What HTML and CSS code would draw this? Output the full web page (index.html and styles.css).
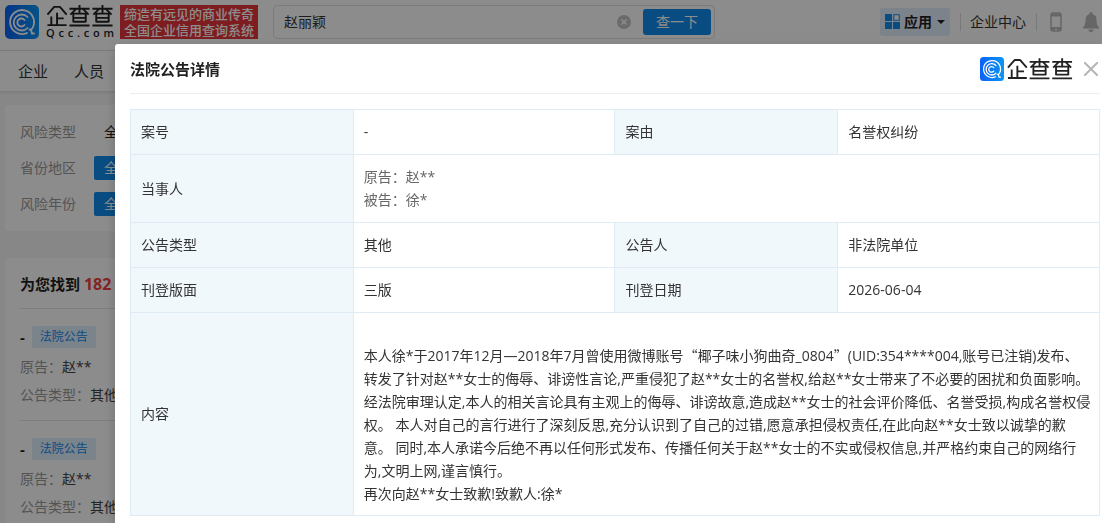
FILE: index.html
```html
<!DOCTYPE html>
<html lang="zh-CN">
<head>
<meta charset="utf-8">
<meta name="viewport" content="width=device-width, initial-scale=1">
<title>法院公告详情</title>
<link rel="stylesheet" href="styles.css">
</head>
<body>
<svg class="defs" aria-hidden="true">
  <defs>
    <linearGradient id="brand" x1="0" y1="0" x2="1" y2="0">
      <stop offset="0" stop-color="#0a62f5"/><stop offset="1" stop-color="#0a96f5"/>
    </linearGradient>
    <symbol id="mark" viewBox="0 0 34 34">
      <rect width="34" height="34" rx="5" fill="url(#brand)"/>
      <g fill="none" stroke="#fff" stroke-width="1.800" stroke-linecap="round">
        <path d="M22 28A12 12 0 1 1 26.500 24.500L24.500 24.500M26 25L27 28.500H29"/>
        <path d="M22.500 23A8 8 0 1 1 22.500 12"/>
        <path d="M19.500 20A4 4 0 1 1 19.500 15"/>
      </g>
    </symbol>
    <symbol id="wordmark" viewBox="0 0 70 23">
      <g fill="none" stroke="currentColor" stroke-width="2" stroke-linejoin="round">
        <path d="M1 10L8 2H14L21 10M1 21H21M11 8V21M11 14H18M5 12V21"/>
        <path d="M24 4H45M34.500 0V8M25 10L31 4M44 10L38 4M28 18V9H41V18M28 13.500H41M28 17.500H41M24 21.500H45"/>
        <path d="M48 4H69M58.500 0V8M49 10L55 4M68 10L62 4M52 18V9H65V18M52 13.500H65M52 17.500H65M48 21.500H69"/>
      </g>
    </symbol>
  </defs>
</svg>

<header class="topbar">
  <a class="brand" href="#" aria-label="企查查">
    <svg class="brand-mark"><use href="#mark"/></svg>
    <span class="brand-name">
      <svg class="brand-word"><use href="#wordmark"/></svg>
      <span class="brand-domain"><i>Q</i><i>c</i><i>c</i><i>.</i><i>c</i><i>o</i><i>m</i></span>
    </span>
  </a>
  <p class="slogan">缔造有远见的商业传奇<br>全国企业信用查询系统</p>
  <form class="search">
    <input class="search-input" type="text" value="赵丽颖" aria-label="搜索">
    <button class="search-clear" type="button" aria-label="清除">
      <svg viewBox="0 0 14 14"><circle cx="7" cy="7" r="7" fill="#c4c4c4"/><path d="M4.500 4.500L9.500 9.500M9.500 4.500L4.500 9.500" stroke="#fff" stroke-width="1.500"/></svg>
    </button>
    <button class="search-submit" type="button">查一下</button>
  </form>
  <nav class="tools">
    <button class="apps" type="button">
      <svg class="apps-icon" viewBox="0 0 14 14"><path d="M0 0H6.500V6.500H0ZM0 7.500H6.500V14H0ZM7.500 7.500H14V14H7.500Z" fill="#128bed"/><path d="M8.200.7H13.300V5.800H8.200Z" fill="#fff" stroke="#128bed"/></svg>
      应用
      <svg class="caret" viewBox="0 0 8 4"><path d="M0 0H8L4 4Z" fill="#222"/></svg>
    </button>
    <a class="center-link" href="#">企业中心</a>
    <a class="tool-icon" href="#" aria-label="手机">
      <svg class="phone" viewBox="0 0 12 20"><rect x="1" y="1" width="10" height="18" rx="2" fill="none" stroke="#bbb" stroke-width="1.500"/><path d="M1 3H11M1 16.500H11" stroke="#bbb" stroke-width="3"/><path d="M5 17H7" stroke="#fff"/></svg>
    </a>
    <a class="bell-link" href="#" aria-label="消息">
      <svg class="bell" viewBox="0 0 16 20"><path d="M8 0A1.500 1.500 0 0 1 9.500 2C12.500 3 13.500 5 13.500 8C13.500 12 14.500 14 16 15.500V16.500H0V15.500C1.500 14 2.500 12 2.500 8C2.500 5 3.500 3 6.500 2A1.500 1.500 0 0 1 8 0ZM5.500 17.500H10.500A2.500 2.500 0 0 1 5.500 17.500Z" fill="#bbb"/></svg>
    </a>
  </nav>
</header>
<nav class="subnav"><a href="#">企业</a><a href="#">人员</a></nav>

<main class="page">
  <section class="card filters">
    <div class="filter"><span class="filter-name">风险类型</span><a class="filter-all plain" href="#">全部</a></div>
    <div class="filter"><span class="filter-name">省份地区</span><a class="filter-all" href="#">全部</a></div>
    <div class="filter"><span class="filter-name">风险年份</span><a class="filter-all" href="#">全部</a></div>
  </section>
  <section class="card results">
    <h2 class="results-title">为您找到 <em>182</em></h2>
    <article class="result">
      <h3 class="result-title">- <span class="tag">法院公告</span></h3>
      <p>原告：<span>赵**</span></p>
      <p>公告类型：<span>其他</span></p>
    </article>
    <article class="result">
      <h3 class="result-title">- <span class="tag">法院公告</span></h3>
      <p>原告：<span>赵**</span></p>
      <p>公告类型：<span>其他</span></p>
    </article>
  </section>
</main>

<div class="mask"></div>
<section class="modal" role="dialog" aria-labelledby="modal-title">
  <header class="modal-head">
    <h1 class="modal-title" id="modal-title">法院公告详情</h1>
    <svg class="modal-mark"><use href="#mark"/></svg>
    <svg class="modal-word"><use href="#wordmark"/></svg>
    <button class="close" type="button" aria-label="关闭"><svg viewBox="0 0 14 14"><path d="M0 0L14 14M14 0L0 14" stroke="#b5b5b5" stroke-width="2"/></svg></button>
  </header>
  <table class="detail">
    <colgroup><col class="col-name"><col class="col-value"><col class="col-name"><col class="col-value"></colgroup>
    <tr><th>案号</th><td>-</td><th>案由</th><td>名誉权纠纷</td></tr>
    <tr><th>当事人</th><td class="parties" colspan="3">原告：赵**<br>被告：徐*</td></tr>
    <tr><th>公告类型</th><td>其他</td><th>公告人</th><td>非法院单位</td></tr>
    <tr><th>刊登版面</th><td>三版</td><th>刊登日期</th><td>2026-06-04</td></tr>
    <tr><th>内容</th><td class="content" colspan="3"><br>本人徐*于2017年12月—2018年7月曾使用微博账号<span class="quote">“</span>椰子味小狗曲奇_0804<span class="quote">”</span>(UID:354****004,账号已注销)发布、<br>转发了针对赵**女士的侮辱、诽谤性言论,严重侵犯了赵**女士的名誉权,给赵**女士带来了不必要的困扰和负面影响。<br>经法院审理认定,本人的相关言论具有主观上的侮辱、诽谤故意,造成赵**女士的社会评价降低、名誉受损,构成名誉权侵<br>权。 本人对自己的言行进行了深刻反思,充分认识到了自己的过错,愿意承担侵权责任,在此向赵**女士致以诚挚的歉<br>意。 同时,本人承诺今后绝不再以任何形式发布、传播任何关于赵**女士的不实或侵权信息,并严格约束自己的网络行<br>为,文明上网,谨言慎行。<br>再次向赵**女士致歉!致歉人:徐*</td></tr>
  </table>
</section>
</body>
</html>
```
FILE: styles.css
```css
* { box-sizing: border-box; }
body {
  margin: 0;
  height: 100vh;
  overflow: hidden;
  background: #f6f6f6;
  color: #333;
  font: 14px/22px "Open Sans", "Noto Sans CJK SC", sans-serif;
}
h1, h2, h3, p { margin: 0; }
a { color: inherit; text-decoration: none; }
button { border: 0; padding: 0; background: none; font: inherit; color: inherit; }
svg { display: block; }
.defs { position: absolute; width: 0; height: 0; }

.topbar {
  display: flex;
  align-items: center;
  height: 51px;
  padding: 0 3px 7px 5px;
  background: #fff;
  border-bottom: 1px solid #e4e4e4;
}
.brand { display: flex; align-items: center; gap: 6px; color: #222; }
.brand-mark { width: 34px; height: 34px; }
.brand-name { display: flex; flex-direction: column; }
.brand-word { width: 70px; height: 22px; }
.brand-domain {
  display: flex;
  justify-content: space-between;
  padding: 0 1px;
  font: 600 11px/11px "Open Sans", sans-serif;
}
.brand-domain i { font-style: normal; }
.slogan {
  margin-left: 5px;
  width: 138px;
  padding: 1px 4px;
  background: #e6353a;
  color: #fff;
  font-size: 13px;
  font-weight: 500;
  line-height: 16px;
  white-space: nowrap;
}
.search {
  display: flex;
  align-items: center;
  flex: 0 1 442px;
  height: 34px;
  margin-left: 15px;
  padding: 0 3px 0 10px;
  border: 1px solid #e0e0e0;
  border-radius: 4px;
}
.search-input { flex: 1; min-width: 0; border: 0; padding: 0; background: none; font: inherit; color: #333; }
.search-clear { width: 14px; height: 14px; margin-right: 12px; }
.search-submit { width: 68px; height: 26px; border-radius: 3px; background: #128bed; color: #fff; }
.tools { display: flex; align-items: center; margin-left: auto; }
.apps {
  display: flex;
  align-items: center;
  gap: 4px;
  width: 70px;
  height: 28px;
  padding: 0 5px;
  border-radius: 3px;
  background: #e3effc;
  color: #222;
  font-weight: bold;
}
.apps-icon { width: 15px; height: 15px; }
.caret { width: 8px; height: 4px; margin-left: 1px; }
.center-link { margin-left: 10px; padding: 0 10px 0 9px; border: solid #ddd; border-width: 0 1px; line-height: 18px; }
.tool-icon { margin-left: 13px; }
.phone { width: 12px; height: 20px; }
.bell-link { flex: none; width: 16px; margin: 0 0 0 21px; }
.bell { width: 16px; height: 20px; }

.subnav {
  display: flex;
  gap: 26px;
  height: 40px;
  padding-left: 18px;
  background: #fff;
  box-shadow: 0 1px 3px rgba(0, 0, 0, .12);
  font-size: 15px;
  line-height: 40px;
}
.page { display: flex; flex-direction: column; gap: 27px; padding: 14px 5px 0; }
.card { border-radius: 4px; background: #fff; padding: 0 15px; }
.filters { display: flex; flex-direction: column; gap: 12px; padding-top: 15px; padding-bottom: 15px; }
.filter { display: flex; align-items: center; gap: 18px; height: 24px; }
.filter-name { color: #999; }
.filter-all { padding: 0 10px; border-radius: 2px; background: #128bed; color: #fff; line-height: 24px; }
.plain { background: none; color: #222; }
.results-title { padding: 15px 0 13px; border-bottom: 1px solid #e6e6e6; font-size: 15px; line-height: 22px; color: #222; }
.results-title em { color: #f04040; font-size: 16px; font-style: normal; }
.result { padding: 17px 0 11px; border-bottom: 1px solid #e6e6e6; color: #999; line-height: 28px; }
.result p span { color: #444; }
.result-title { display: flex; align-items: center; gap: 7px; margin-bottom: 5px; font-size: 15px; line-height: 22px; color: #222; }
.tag { padding: 0 8px; border-radius: 2px; background: #e0f0fd; color: #128bed; font-size: 12px; font-weight: normal; }

.mask { position: fixed; inset: 0; background: rgba(0, 0, 0, .45); }
.modal {
  position: fixed;
  inset: 44px 0 0 115px;
  padding: 0 2px 0 15px;
  border-radius: 3px 0 0 0;
  background: #fff;
  box-shadow: 0 4px 12px rgba(0, 0, 0, .2);
}
.modal-head { display: flex; align-items: center; height: 50px; margin-bottom: 15px; border-bottom: 1px solid #eee; }
.modal-title { margin-right: auto; font-size: 15px; line-height: 22px; color: #222; }
.modal-mark { width: 24px; height: 24px; margin-right: 3px; }
.modal-word { width: 66px; height: 22px; color: #222; }
.close { width: 14px; height: 14px; margin: 0 2px 0 11px; }
.detail { width: 100%; table-layout: fixed; border-collapse: collapse; }
.col-name { width: 23%; }
.col-value { width: 27%; }
.detail th, .detail td { padding: 11px 10px; border: 1px solid #e0ecf5; text-align: left; font-weight: normal; }
.detail th { background: #f0f8fc; }
.detail .parties { padding: 10px 10px 11px; color: #666; line-height: 23px; }
.detail .content { padding: 8px 10px 10px; line-height: 23px; white-space: nowrap; }
.quote { font-family: "Noto Sans CJK SC", sans-serif; }
```
